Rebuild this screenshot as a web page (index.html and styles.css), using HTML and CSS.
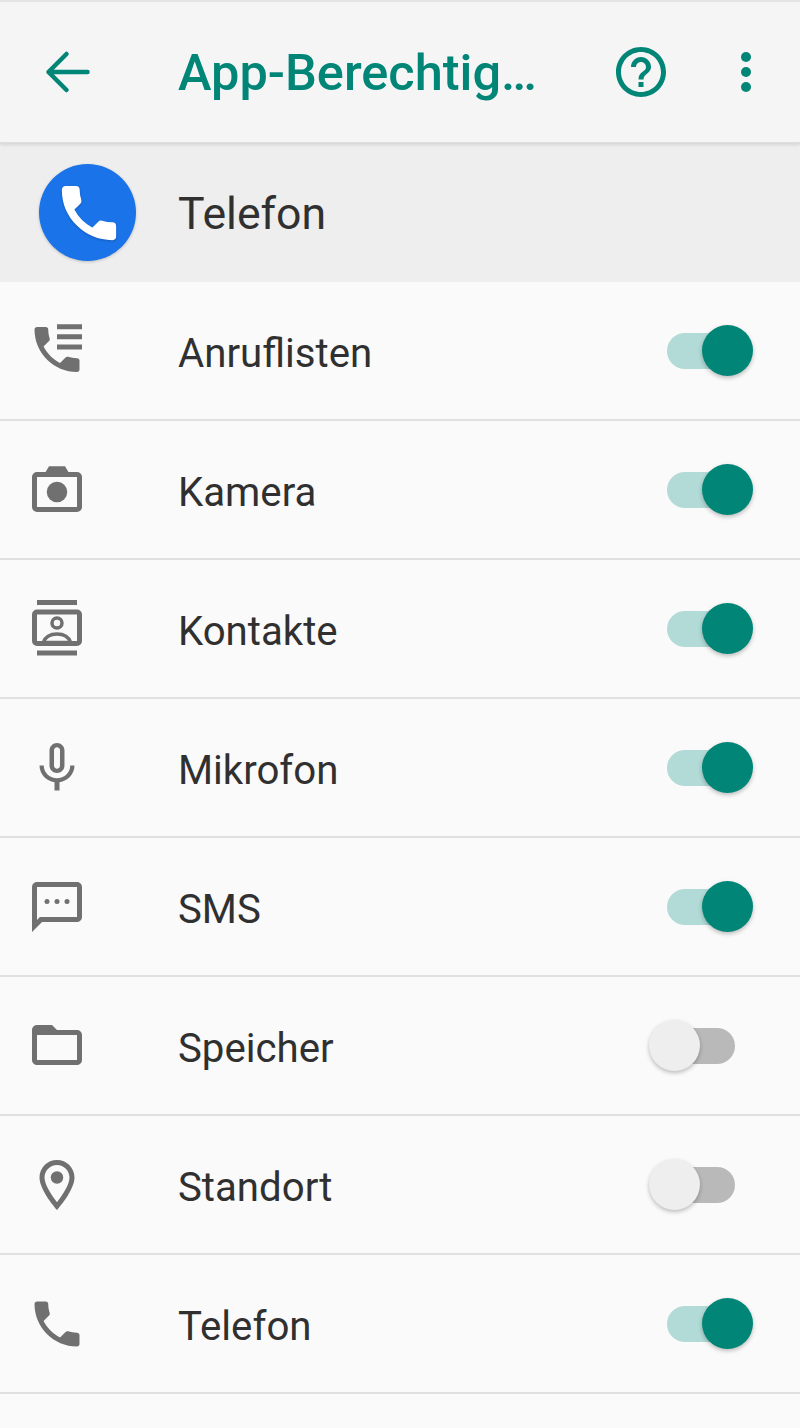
FILE: index.html
```html
<!DOCTYPE html>
<html lang="de">
<head>
    <meta charset="UTF-8">
    <meta name="viewport" content="width=device-width, initial-scale=1.0">
    <title>App-Berechtigungen</title>
    <link rel="stylesheet" href="styles.css">
</head>
<body>
    <header class="toolbar">
        <svg class="back-icon" viewBox="0 0 24 24"><path d="M19.400 12H3.800M11 4.800 3.800 12l7.200 7.200"/></svg>
        <h1 class="toolbar-title">App-Berechtig…</h1>
        <svg class="toolbar-icon" viewBox="0 0 24 24"><path d="M11 18h2v-2h-2v2zm1-16C6.480 2 2 6.480 2 12s4.480 10 10 10 10-4.480 10-10S17.520 2 12 2zm0 18c-4.410 0-8-3.590-8-8s3.590-8 8-8 8 3.590 8 8-3.590 8-8 8zm0-14c-2.210 0-4 1.790-4 4h2c0-1.100.9-2 2-2s2 .9 2 2c0 2-3 1.750-3 5h2c0-2.250 3-2.500 3-5 0-2.210-1.790-4-4-4z"/></svg>
        <svg class="toolbar-icon" viewBox="0 0 24 24"><circle cx="12" cy="6" r="2"/><circle cx="12" cy="12" r="2"/><circle cx="12" cy="18" r="2"/></svg>
    </header>

    <section class="app-row">
        <div class="app-icon">
            <svg viewBox="0 0 24 24"><path d="M6.620 10.790c1.440 2.830 3.760 5.140 6.590 6.590l2.200-2.200c.27-.27.67-.36 1.020-.24 1.120.37 2.330.57 3.570.57.55 0 1 .45 1 1V20c0 .55-.45 1-1 1-9.390 0-17-7.610-17-17 0-.55.45-1 1-1h3.500c.55 0 1 .45 1 1 0 1.250.2 2.450.57 3.570.11.35.03.74-.25 1.020l-2.200 2.200z"/></svg>
        </div>
        <span class="app-name">Telefon</span>
    </section>

    <ul class="permissions">
        <li class="permission">
            <svg class="permission-icon" viewBox="0 0 24 24"><path transform="translate(0 -.6)" d="M6.620 10.790c1.440 2.830 3.760 5.140 6.590 6.590l2.200-2.200c.27-.27.67-.36 1.020-.24 1.120.37 2.330.57 3.570.57.55 0 1 .45 1 1V20c0 .55-.45 1-1 1-9.390 0-17-7.610-17-17 0-.55.45-1 1-1h3.500c.55 0 1 .45 1 1 0 1.250.2 2.450.57 3.570.11.35.03.74-.25 1.020l-2.200 2.200z"/><path d="M12 1.300h10v2H12zM12 5.300h10v2H12zM12 9.400h10v2H12z"/></svg>
            <span class="permission-name">Anruflisten</span>
            <span class="switch on"><span class="thumb"></span></span>
        </li>
        <li class="permission">
            <svg class="permission-icon" viewBox="0 0 24 24"><path d="M7.200 5.200 8.800 2.500h6.400l1.600 2.700z"/><rect class="outline" x="3" y="5.800" width="18" height="14" rx="1"/><circle cx="12" cy="12.800" r="4.100"/></svg>
            <span class="permission-name">Kamera</span>
            <span class="switch on"><span class="thumb"></span></span>
        </li>
        <li class="permission">
            <svg class="permission-icon" viewBox="0 0 24 24"><path d="M4 .4h16v2H4zM4 20.600h16v2H4z"/><rect class="outline" x="3" y="5.200" width="18" height="12.600" rx="1"/><circle class="thin" cx="12" cy="9.600" r="2"/><path class="thin" d="M6.500 17.400c.8-2.200 3-3.400 5.500-3.400s4.700 1.200 5.500 3.400z"/></svg>
            <span class="permission-name">Kontakte</span>
            <span class="switch on"><span class="thumb"></span></span>
        </li>
        <li class="permission">
            <svg class="permission-icon" viewBox="0 0 24 24"><path d="M12 14c1.660 0 2.990-1.340 2.990-3L15 5c0-1.660-1.340-3-3-3S9 3.340 9 5v6c0 1.660 1.340 3 3 3zm-1.200-9.100c0-.66.54-1.200 1.200-1.200.66 0 1.200.54 1.200 1.200l-.01 6.200c0 .66-.53 1.200-1.190 1.200-.66 0-1.200-.54-1.200-1.200V4.900zm6.500 6.100c0 3-2.540 5.100-5.300 5.100S6.700 14 6.700 11H5c0 3.410 2.720 6.230 6 6.720V21h2v-3.280c3.280-.48 6-3.300 6-6.720h-1.700z"/></svg>
            <span class="permission-name">Mikrofon</span>
            <span class="switch on"><span class="thumb"></span></span>
        </li>
        <li class="permission">
            <svg class="permission-icon" viewBox="0 0 24 24"><path d="M20 2H4c-1.100 0-1.990.9-1.990 2L2 22l4-4h14c1.100 0 2-.9 2-2V4c0-1.100-.9-2-2-2zm0 14H5.170L4 17.170V4h16v12z"/><circle cx="8" cy="9.800" r="1"/><circle cx="12" cy="9.800" r="1"/><circle cx="16" cy="9.800" r="1"/></svg>
            <span class="permission-name">SMS</span>
            <span class="switch on"><span class="thumb"></span></span>
        </li>
        <li class="permission">
            <svg class="permission-icon" viewBox="0 0 24 24"><path transform="translate(0 -.4)" d="M20 6h-8l-2-2H4c-1.100 0-1.990.9-1.990 2L2 18c0 1.100.9 2 2 2h16c1.100 0 2-.9 2-2V8c0-1.100-.9-2-2-2zm0 12H4V8h16v10z"/></svg>
            <span class="permission-name">Speicher</span>
            <span class="switch"><span class="thumb"></span></span>
        </li>
        <li class="permission">
            <svg class="permission-icon" viewBox="0 0 24 24"><path d="M12 2C8.130 2 5 5.130 5 9c0 5.250 7 13 7 13s7-7.750 7-13c0-3.870-3.130-7-7-7zM7 9c0-2.760 2.240-5 5-5s5 2.240 5 5c0 2.880-2.880 7.190-5 9.880C9.920 16.210 7 11.850 7 9z"/><circle cx="12" cy="9" r="2.500"/></svg>
            <span class="permission-name">Standort</span>
            <span class="switch"><span class="thumb"></span></span>
        </li>
        <li class="permission">
            <svg class="permission-icon" viewBox="0 0 24 24"><path d="M6.620 10.790c1.440 2.830 3.760 5.140 6.590 6.590l2.200-2.200c.27-.27.67-.36 1.020-.24 1.120.37 2.330.57 3.570.57.55 0 1 .45 1 1V20c0 .55-.45 1-1 1-9.390 0-17-7.610-17-17 0-.55.45-1 1-1h3.500c.55 0 1 .45 1 1 0 1.250.2 2.450.57 3.570.11.35.03.74-.25 1.020l-2.200 2.200z"/></svg>
            <span class="permission-name">Telefon</span>
            <span class="switch on"><span class="thumb"></span></span>
        </li>
    </ul>
</body>
</html>
```

FILE: styles.css
```css
body {
    margin: 0;
    background-color: #fafafa;
    font-family: Roboto, sans-serif;
    color: #303030;
}
.toolbar {
    display: flex;
    align-items: center;
    gap: 45px;
    box-sizing: border-box;
    height: 143px;
    padding-right: 24px;
    background-color: #f5f5f5;
    border-top: 2px solid #e4e4e4;
    border-bottom: 1px solid #dedede;
    box-shadow: 0 2px 3px rgba(0, 0, 0, 0.1);
    position: relative;
}
.back-icon {
    width: 60px;
    height: 60px;
    margin-left: 39px;
    margin-right: 34px;
    fill: none;
    stroke: #008577;
    stroke-width: 1.8;
    stroke-linecap: round;
    stroke-linejoin: round;
}
.toolbar-title {
    flex: 1;
    margin: 0;
    font-size: 50.5px;
    font-weight: 500;
    color: #008577;
    white-space: nowrap;
}
.toolbar-icon {
    width: 60px;
    height: 60px;
    fill: #008577;
}
.app-row {
    display: flex;
    align-items: center;
    gap: 42px;
    height: 139px;
    padding-left: 39px;
    background-color: #eeeeee;
}
.app-icon {
    display: flex;
    align-items: center;
    justify-content: center;
    width: 97px;
    height: 97px;
    border-radius: 50%;
    background-color: #1a73e8;
    box-shadow: 0 1px 3px rgba(0, 0, 0, 0.2);
}
.app-icon svg {
    width: 70px;
    height: 70px;
    margin-left: 3px;
    fill: #ffffff;
    stroke: #ffffff;
    stroke-width: 0.6;
    stroke-linejoin: round;
    filter: drop-shadow(0 1px 1px rgba(0, 0, 0, 0.2));
}
.app-name {
    padding-top: 2px;
    font-size: 44.6px;
}
.permissions {
    margin: 0;
    padding: 0;
    list-style: none;
}
.permission {
    display: flex;
    align-items: center;
    box-sizing: border-box;
    height: 139px;
    padding-left: 27px;
    padding-right: 65px;
    border-bottom: 2px solid #e0e0e0;
}
.permission-icon {
    width: 60px;
    height: 60px;
    margin-right: 91px;
    fill: #707070;
}
.permission-icon .outline {
    fill: none;
    stroke: #707070;
    stroke-width: 2;
}
.permission-icon .thin {
    fill: none;
    stroke: #707070;
    stroke-width: 1.4;
}
.permission-name {
    flex: 1;
    padding-top: 5px;
    font-size: 40.2px;
}
.switch {
    position: relative;
    width: 68px;
    height: 36px;
    border-radius: 18px;
    background-color: #b9b9b9;
}
.switch.on {
    background-color: #b2dad6;
}
.thumb {
    position: absolute;
    top: -8px;
    left: -18px;
    width: 51px;
    height: 51px;
    border-radius: 50%;
    background-color: #eeeeee;
    box-shadow: 0 2px 4px rgba(0, 0, 0, 0.25);
}
.switch.on .thumb {
    left: auto;
    right: -18px;
    background-color: #008577;
}
```
